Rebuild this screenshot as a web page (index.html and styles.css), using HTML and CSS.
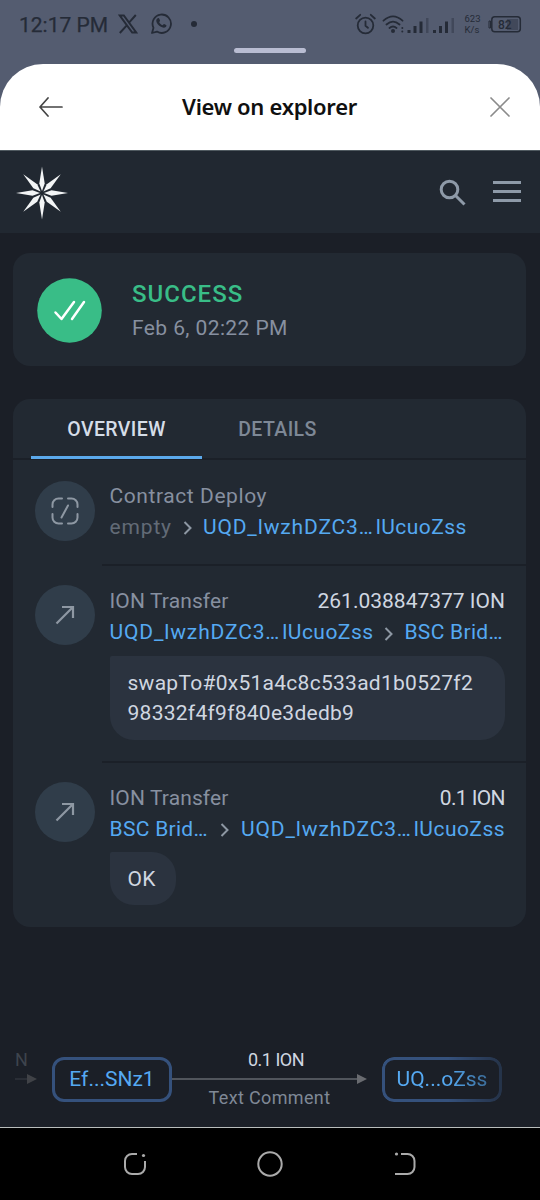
FILE: index.html
```html
<!DOCTYPE html>
<html lang="en">
<head>
<meta charset="utf-8">
<title>View on explorer</title>
<link rel="stylesheet" href="styles.css">
</head>
<body>
<div class="screen">
  <div class="statusbar">
    <span class="clock">12:17 PM</span>
    <svg class="status-x" width="20" height="20" viewBox="0 0 20 20" fill="none" stroke="#252b37" stroke-width="2"><path d="M1.800 1.500h4l12.400 17h-4zM17.800 1l-7 7.800M8.800 11.400L1.800 19"/></svg>
    <svg class="status-wa" width="23" height="23" viewBox="0 0 23 23"><path d="M2 21l1.500-5.200A9.200 9.200 0 1 1 7 19.600z" fill="none" stroke="#252b37" stroke-width="1.800" stroke-linejoin="round"/><path d="M7.800 6.300c.8-.5 1.300-.1 1.600.7l.6 1.500c.2.6-.7 1.200-.8 1.700.7 1.400 1.800 2.400 3.300 3 .6-.2 1-1.300 1.600-1.200l2 1c.7.4.3 1.500-.3 2.100-1.400 1.200-3.500.7-5.400-.5-2-1.300-3.700-3.300-4.100-5.400-.2-1.200.4-2.300 1.500-2.900z" fill="#252b37"/></svg>
    <span class="status-dot"></span>
    <svg class="status-right" width="168" height="24" viewBox="0 0 168 24">
      <g fill="none" stroke="#252b37" stroke-width="1.800" stroke-linecap="round">
        <circle cx="10.500" cy="12.500" r="7.800"/><path d="M10.500 8.500v4.300l2.400 2M1.200 5.500l4-3.700M19.800 5.500l-4-3.700"/>
        <path d="M28.500 7.700Q38-1 47.500 7.700M31.500 11.500Q38 5.700 44.500 11.500M34.500 15Q38 12.100 41.500 15"/>
      </g>
      <g fill="#252b37"><circle cx="38" cy="18" r="2"/><circle cx="47.300" cy="15" r="1"/><circle cx="47.300" cy="18.500" r="1"/>
        <rect x="52.500" y="17" width="3" height="3"/><rect x="58.500" y="13" width="3" height="7"/><rect x="64.500" y="8.500" width="3" height="11.500"/>
        <rect x="78" y="17" width="3" height="3"/><rect x="84" y="13" width="3" height="7"/><rect x="90" y="8.500" width="3" height="11.500"/></g>
      <g fill="#41485a"><rect x="71" y="5" width="2.500" height="15"/><rect x="96.500" y="5" width="2.500" height="15"/></g>
      <rect x="152" y="6" width="11" height="11" fill="#41485a"/>
      <rect x="136.800" y="3.800" width="28.500" height="15" rx="3" fill="none" stroke="#252b37" stroke-width="1.500"/>
      <path d="M135.500 8h-1.500v7h1.500z" stroke="#252b37" fill="none"/>
      <g class="status-text"><text x="109.500" y="8.800">623</text><text x="109.500" y="20">K/s</text></g>
      <text class="battery-text" x="143" y="15.500">82</text>
    </svg>
    <span class="grabber"></span>
  </div>

  <div class="sheet">
    <svg width="24" height="20" viewBox="0 0 24 20" fill="none" stroke="#444" stroke-width="1.700" stroke-linecap="round" stroke-linejoin="round"><path d="M23 10H1M9 1L1 10l8 9"/></svg>
    <h1>View on explorer</h1>
    <svg width="20" height="20" viewBox="0 0 20 20" stroke="#8b8b8b" stroke-width="1.700" stroke-linecap="round"><path d="M1 1l18 18M19 1L1 19"/></svg>
  </div>

  <header class="topbar">
    <svg class="logo" width="52" height="54" viewBox="-26 -27 52 54" fill="#f3f5f6">
      <path id="ray" d="M0-26.500L2.700-9.500 0-2-2.700-9.500z"/>
      <use href="#ray" transform="rotate(90)"/><use href="#ray" transform="rotate(180)"/><use href="#ray" transform="rotate(270)"/>
      <use href="#ray" transform="rotate(45)"/><use href="#ray" transform="rotate(135)"/><use href="#ray" transform="rotate(225)"/><use href="#ray" transform="rotate(315)"/>
    </svg>
    <svg class="search" width="28" height="28" viewBox="0 0 28 28" fill="none" stroke="#8e9aa8" stroke-width="3"><circle cx="10.500" cy="10.500" r="8.300"/><path d="M16.500 16.500l9 9"/></svg>
    <svg class="menu" width="28" height="22" viewBox="0 0 28 22" fill="#8e9aa8"><path d="M0 0h28v3H0zM0 9h28v3H0zM0 18h28v3H0z"/></svg>
  </header>

  <main>
    <section class="card status">
      <svg width="65" height="65" viewBox="0 0 65 65"><circle cx="32.500" cy="32.500" r="32.300" fill="#39bd87"/><path d="M18.500 34.500l6 6.500L37 24M35 41l12-17" fill="none" stroke="#fff" stroke-width="2.500" stroke-linecap="round" stroke-linejoin="round"/></svg>
      <div class="status-copy"><div class="success">SUCCESS</div><div class="date">Feb 6, 02:22 PM</div></div>
    </section>

    <section class="card overview">
      <nav class="tabs"><span class="tab active">OVERVIEW</span><span class="tab">DETAILS</span></nav>

      <article class="row">
        <span class="disc"><svg width="28" height="28" viewBox="0 0 28 28" fill="none" stroke="#8e98a3" stroke-width="2" stroke-linecap="round"><path d="M1.500 10V7.500a6 6 0 0 1 6-6H11M17 1.500h3.500a6 6 0 0 1 6 6V10M26.500 17v3.500a6 6 0 0 1-6 6H17M11 26.500H7.500a6 6 0 0 1-6-6V17M17 8.500l-6.500 12"/></svg></span>
        <div class="body">
          <div class="line"><span class="kind deploy">Contract Deploy</span></div>
          <div class="line route"><span class="empty">empty</span><svg class="chev" width="9" height="14" viewBox="0 0 9 14"><path d="M1.500 1l6 6-6 6"/></svg><span class="addr">UQD_lwzhDZC3…<span class="tail">lUcuoZss</span></span></div>
        </div>
      </article>

      <article class="row">
        <span class="disc"><svg width="20" height="20" viewBox="0 0 20 20" fill="none" stroke="#8e98a3" stroke-width="2.200"><path d="M1.500 18.500L18 2M7 2h11v11"/></svg></span>
        <div class="body lower">
          <div class="line between"><span class="kind">ION Transfer</span><span class="amount">261.038847377 ION</span></div>
          <div class="line"><span class="addr">UQD_lwzhDZC3…<span class="tail">lUcuoZss</span></span><svg class="chev" width="9" height="14" viewBox="0 0 9 14"><path d="M1.500 1l6 6-6 6"/></svg><span class="bridge">BSC Brid…</span></div>
          <div class="bubble">swapTo#0x51a4c8c533ad1b0527f2<br>98332f4f9f840e3dedb9</div>
        </div>
      </article>

      <article class="row">
        <span class="disc"><svg width="20" height="20" viewBox="0 0 20 20" fill="none" stroke="#8e98a3" stroke-width="2.200"><path d="M1.500 18.500L18 2M7 2h11v11"/></svg></span>
        <div class="body lower">
          <div class="line between"><span class="kind">ION Transfer</span><span class="amount small">0.1 ION</span></div>
          <div class="line between route"><span class="bridge">BSC Brid…</span><svg class="chev" width="9" height="14" viewBox="0 0 9 14"><path d="M1.500 1l6 6-6 6"/></svg><span class="addr">UQD_lwzhDZC3…<span class="tail">lUcuoZss</span></span></div>
          <div class="bubble ok">OK</div>
        </div>
      </article>
    </section>

    <div class="graph">
      <div class="edge-in"><span>N</span><svg width="22" height="10" viewBox="0 0 22 10"><path d="M0 5h12" stroke="#666b73"/><path d="M12 0l10 5-10 5z" fill="#777"/></svg></div>
      <span class="node">Ef...SNz1</span>
      <div class="edge"><span class="edge-amount">0.1 ION</span><svg width="195" height="10" viewBox="0 0 195 10"><path d="M0 5h187" stroke="#65686f" stroke-width="1.500"/><path d="M185 0l10 5-10 5z" fill="#696b70"/></svg><span class="edge-label">Text Comment</span></div>
      <span class="node last">UQ...oZss</span>
    </div>
  </main>

  <footer class="navbar">
    <svg width="24" height="24" viewBox="0 0 24 24" fill="none" stroke="#aaa" stroke-width="2"><path d="M14 2H9a7 7 0 0 0-7 7v6a7 7 0 0 0 7 7h6a7 7 0 0 0 7-7V9"/><circle cx="20.500" cy="3.500" r="1.600" fill="#aaa" stroke="none"/></svg>
    <svg class="home" width="26" height="26" viewBox="0 0 26 26" fill="none" stroke="#aaa" stroke-width="2"><circle cx="13" cy="13" r="11.700"/></svg>
    <svg width="22" height="24" viewBox="0 0 22 24" fill="none" stroke="#aaa" stroke-width="2"><path d="M7 2h6.500a7 7 0 0 1 7 7v6a7 7 0 0 1-7 7H1"/><circle cx="2.500" cy="2" r="1.600" fill="#aaa" stroke="none"/></svg>
  </footer>
</div>
</body>
</html>
```
FILE: styles.css
```css
* { box-sizing: border-box; }
body { margin: 0; background: #545c70; font-family: Roboto, sans-serif; }
svg { display: block; flex: none; }
.screen { width: 540px; height: 1200px; display: flex; flex-direction: column; overflow: hidden; }

.statusbar { height: 64px; flex: none; position: relative; display: flex; align-items: flex-start; padding: 13px 17px 0 19px; color: #252b37; }
.clock { font-size: 21px; line-height: 24px; width: 99px; letter-spacing: 0; white-space: nowrap; -webkit-text-stroke: .25px #252b37; }
.status-x { margin-top: 1px; }
.status-wa { margin-left: 12px; margin-top: -1px; }
.status-dot { width: 6px; height: 6px; border-radius: 50%; background: #252b37; margin: 8px 0 0 18px; }
.status-right { margin-left: auto; }
.status-text { font-size: 9.500px; fill: #252b37; }
.battery-text { font-size: 12px; fill: #252b37; font-weight: 500; }
.grabber { position: absolute; left: 234px; top: 48px; width: 72px; height: 5px; border-radius: 3px; background: #b9bdd2; }

.sheet { height: 86px; flex: none; background: #fff; border-radius: 43px 43px 0 0; display: flex; align-items: center; justify-content: space-between; padding: 0 30px 0 39px; }
.sheet h1 { margin: 0 14px 2px 0; font: 600 22px/30px "Noto Sans", sans-serif; color: #101010; letter-spacing: -.3px; }

.topbar { height: 83px; flex: none; background: #212831; border-top: 1px solid #505a60; display: flex; align-items: center; padding: 2px 19px 0 16px; }
.search { margin-left: auto; margin-right: 26px; }
.menu { margin-bottom: 2px; }

main { flex: 1; background: #1b1f27; padding: 20px 14px 0 13px; display: flex; flex-direction: column; }
.card { background: #222932; border-radius: 17px; }
.status { height: 113px; display: flex; align-items: center; gap: 30px; padding: 1px 24px 0; }
.status-copy { padding-top: 3px; }
.success { font-size: 24px; line-height: 33px; font-weight: 500; color: #39bd87; letter-spacing: 1px; }
.date { font-size: 21px; line-height: 34px; color: #8790a0; letter-spacing: .4px; }
.overview { margin-top: 33px; height: 528px; }
.tabs { height: 61px; border-bottom: 2px solid #1b2028; display: flex; padding-left: 18px; }
.tab { width: 151px; height: 60px; line-height: 61px; text-align: center; font-size: 19.500px; font-weight: 500; letter-spacing: .4px; color: #7e8896; white-space: nowrap; }
.tab.active { width: 171px; color: #d5dde8; border-bottom: 3px solid #5ba9ec; }

.row { position: relative; display: flex; gap: 15px; padding: 21px 21px 21px 21.500px; }
.row:first-of-type { padding-bottom: 22px; }
.row + .row::before { content: ""; position: absolute; left: 89px; right: 0; top: 0; height: 1.500px; background: #1b2028; }
.disc { width: 60px; height: 60px; flex: none; border-radius: 50%; background: #303d4a; display: flex; align-items: center; justify-content: center; }
.body { flex: 1; min-width: 0; }
.line { height: 31px; line-height: 31px; display: flex; align-items: center; font-size: 21px; white-space: nowrap; }
.lower { padding-top: 1px; }
.between { justify-content: space-between; }
.kind { color: #8790a0; letter-spacing: .12px; }
.deploy { letter-spacing: .58px; }
.empty { color: #626b77; letter-spacing: .85px; }
.addr, .bridge { color: #55a9f2; }
.addr { letter-spacing: .860px; }
.tail { margin-left: 2px; letter-spacing: .460px; }
.bridge { letter-spacing: .3px; }
.amount { color: #d0d7e1; }
.small { letter-spacing: -.6px; }
.route { height: 30px; line-height: 30px; }
.chev { margin: 2px 11px 0; fill: none; stroke: #8d97a3; stroke-width: 2; }
.bubble { margin-top: 8px; height: 84px; padding: 12px 18px; background: #2b333f; color: #d0d7e1; border-radius: 2px 24px 24px 24px; font-size: 21px; line-height: 30px; letter-spacing: .27px; white-space: nowrap; }
.bubble.ok { width: 66px; height: 53px; padding-top: 12px; }

.graph { margin: auto -14px 15px -13px; height: 66px; display: flex; align-items: center; font-size: 18px; color: #d0d7e1; }
.graph > * { flex: none; }
.edge-in { width: 52px; padding-left: 15px; height: 66px; color: #3e444d; }
.edge-in span { display: block; line-height: 28px; height: 28px; }
.edge-in svg { opacity: .4; }
.node { width: 120px; height: 45px; border: 3px solid #35517c; border-radius: 12px; display: flex; align-items: center; justify-content: center; font-size: 21px; color: #55a9f2; }
.edge { width: 195px; height: 66px; text-align: center; display: flex; flex-direction: column; align-items: center; }
.edge span { line-height: 28px; height: 28px; white-space: nowrap; }
.edge-amount { margin-left: 13px; letter-spacing: -.5px; }
.edge-label { color: #7f8896; letter-spacing: .35px; }
.node.last { margin-left: 15px; -webkit-mask-image: linear-gradient(90deg, #000 55%, rgba(0,0,0,.4)); mask-image: linear-gradient(90deg, #000 55%, rgba(0,0,0,.4)); }

.navbar { height: 73px; flex: none; background: #000; border-top: 1px solid #b9bdbc; display: flex; align-items: center; justify-content: space-between; padding: 0 124px 0 123px; }
.home { margin-right: 1px; }
```
